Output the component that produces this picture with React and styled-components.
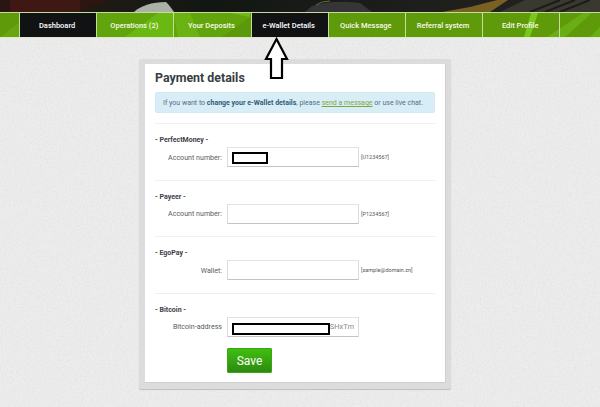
import React from "react";
import styled, { createGlobalStyle } from "styled-components";

const Global = createGlobalStyle`
  html, body { margin: 0; padding: 0; }
  body {
    width: 600px; height: 407px; overflow: hidden;
    background: #ececec;
    font-family: Roboto, "Liberation Sans", sans-serif;
    color: #444;
  }
`;

const Page = styled.div`
  position: relative;
  width: 600px;
  height: 407px;
  overflow: hidden;
`;

const Texture = styled.svg`
  position: absolute;
  inset: 0;
  width: 600px;
  height: 407px;
`;

const Banner = styled.svg`
  display: block;
  position: relative;
  width: 600px;
  height: 12px;
`;

const NavBar = styled.nav`
  position: relative;
  height: 26px;
  box-sizing: border-box;
  background: #5f9a0a;
  border-top: 1px solid #c6dc9c;
  border-bottom: 1px solid #dfe9c8;
  display: flex;
  padding-left: 19px;
`;

const Facets = styled.svg`
  position: absolute;
  left: 0;
  top: 0;
  width: 600px;
  height: 24px;
`;

const NavItem = styled.a`
  position: relative;
  flex: 0 0 77.2px;
  box-sizing: border-box;
  display: flex;
  align-items: center;
  justify-content: center;
  padding-right: 2px;
  font-size: 7.5px;
  font-weight: 500;
  color: ${(p) => (p.$dark ? "#ffffff" : "#f6fbe8")};
  background: ${(p) => (p.$dark ? "#111213" : "transparent")};
  border-left: 1px solid #c6dc9c;
  white-space: nowrap;
`;

const NavEnd = styled.span`
  position: relative;
  width: 0;
  border-left: 1px solid #c6dc9c;
`;

const Main = styled.main`
  position: relative;
  display: flex;
  justify-content: center;
  padding: 21px 10px 0 0;
`;

const Panel = styled.section`
  width: 312px;
  height: 330px;
  box-sizing: border-box;
  padding: 5px 5px 5px 6px;
  background: #dcdcdc;
  border-radius: 2px;
  box-shadow: 0 1px 1px #bdbdbd;
`;

const Card = styled.div`
  height: 319px;
  box-sizing: border-box;
  background: #fff;
  border-right: 1px solid #cfcfcf;
  border-bottom: 1px solid #cfcfcf;
  padding: 6px 10px 0 10px;
`;

const Title = styled.h1`
  margin: 0;
  height: 22px;
  font-size: 12.4px;
  line-height: 15px;
  font-weight: 700;
  color: #3a3d42;
  letter-spacing: 0;
`;

const Notice = styled.p`
  margin: 0 0 10px;
  height: 21px;
  box-sizing: border-box;
  background: #d9edf7;
  border: 1px solid #d2e8f2;
  border-radius: 2px;
  padding: 0 7px;
  font-size: 7px;
  line-height: 20px;
  color: #4f7185;
  white-space: nowrap;
  strong { color: #2f5d78; font-weight: 700; }
  a { color: #7aa83b; text-decoration: underline; }
`;

const Group = styled.div`
  border-top: 1px solid #f0f0f0;
  height: 56.5px;
  box-sizing: border-box;
  padding-top: 12px;
`;

const GroupTitle = styled.div`
  font-size: 7px;
  line-height: 9px;
  font-weight: 700;
  color: #3d4148;
  margin-bottom: 2px;
`;

const Row = styled.div`
  display: grid;
  grid-template-columns: 67px 132px auto;
  column-gap: 5px;
  align-items: center;
`;

const Label = styled.label`
  text-align: right;
  font-size: 7.1px;
  color: #5a5d60;
  white-space: nowrap;
`;

const FieldWrap = styled.div`
  position: relative;
  height: 20px;
`;

const Field = styled.input`
  display: block;
  width: 132px;
  height: 20px;
  box-sizing: border-box;
  padding: 0 4px;
  text-align: right;
  font: 7.5px Roboto, "Liberation Sans", sans-serif;
  color: #8a8a8a;
  background: #fff;
  border: 1px solid #dcdcdc;
  border-bottom: 1px solid #c4c4c4;
  border-top: 1px solid #e2e2e2;
  outline: none;
`;

const Redact = styled.span`
  position: absolute;
  left: ${(p) => p.$left}px;
  top: ${(p) => p.$top}px;
  width: ${(p) => p.$width}px;
  height: ${(p) => p.$height}px;
  box-sizing: border-box;
  background: #fff;
  border: 2.5px solid #000;
`;

const Hint = styled.span`
  margin-left: -3px;
  font-size: 5.5px;
  color: #55585c;
  white-space: nowrap;
`;

const Save = styled.button`
  display: block;
  width: 45px;
  height: 25px;
  margin: -1px 0 0 72px;
  padding: 0;
  font: 400 12px Roboto, "Liberation Sans", sans-serif;
  color: #fff;
  background: linear-gradient(#3fbf10, #2d8a0f);
  border: 1px solid #3aa516;
  border-radius: 1px;
`;

const Arrow = styled.svg`
  position: absolute;
  left: 262px;
  top: 36px;
  width: 30px;
  height: 46px;
`;

const items = [
  ["Dashboard", true],
  ["Operations (2)"],
  ["Your Deposits"],
  ["e-Wallet Details", true],
  ["Quick Message"],
  ["Referral system"],
  ["Edit Profile"],
];

const groups = [
  { name: "PerfectMoney", label: "Account number:", hint: "[U1234567]", redact: { $left: 5, $top: 5, $width: 36, $height: 12 } },
  { name: "Payeer", label: "Account number:", hint: "[P1234567]" },
  { name: "EgoPay", label: "Wallet:", hint: "[sample@domain.zn]" },
  { name: "Bitcoin", label: "Bitcoin-address", value: "SHxTm", redact: { $left: 5, $top: 6, $width: 98, $height: 12 } },
];

export default function App() {
  return (
    <Page>
      <Global />
      <Texture aria-hidden="true">
        <filter id="grain">
          <feTurbulence type="fractalNoise" baseFrequency="0.55" numOctaves="2" seed="4" />
          <feColorMatrix values="0 0 0 0 0.6  0 0 0 0 0.6  0 0 0 0 0.6  0 0 0 0.6 -0.26" />
        </filter>
        <rect width="600" height="407" filter="url(#grain)" />
      </Texture>

      <Banner viewBox="0 0 600 12" aria-hidden="true">
        <defs>
          <linearGradient id="bg" x1="0" x2="1" y1="0" y2="0">
            <stop offset="0" stopColor="#2a1512" />
            <stop offset="0.2" stopColor="#1c1a14" />
            <stop offset="0.35" stopColor="#121712" />
            <stop offset="0.7" stopColor="#1e1e1c" />
            <stop offset="1" stopColor="#23241e" />
          </linearGradient>
        </defs>
        <rect width="600" height="12" fill="url(#bg)" />
        <rect x="10" y="0" width="70" height="12" fill="#4a1a14" opacity="0.7" />
        <path d="M80 12 L90 6 L110 0 L80 0Z" fill="#33150f" opacity="0.7" />
        <path d="M134 12 C140 6 152 2 166 2 C170 6 172 9 174 12Z" fill="#aab2a6" />
        <path d="M312 6 C326 1 345 1 360 3 L372 12 L305 12Z" fill="#353537" />
        <path d="M316 5 L322 2 L330 1" stroke="#5d6f2a" strokeWidth="1" fill="none" />
        <path d="M442 12 L470 7 L497 0 L508 0 L490 12Z" fill="#8a6c24" opacity="0.85" />
        <path d="M500 12 L525 0 L600 0 L600 12Z" fill="#3a392f" />
        <path d="M530 12 L560 0 M545 12 L575 0 M560 12 L590 0" stroke="#1c1c18" strokeWidth="2" />
      </Banner>

      <NavBar>
        <Facets viewBox="0 0 600 24" aria-hidden="true">
          <path d="M0 24 L19 10 L19 24Z" fill="#66a60f" />
          <path d="M96 0 L250 0 L250 24 L96 24Z" fill="#62a40c" />
          <path d="M125 24 L158 0 L173 0 L173 24Z" fill="#6ab812" />
          <path d="M173 0 L190 0 L200 24 L178 24Z" fill="#6ab312" />
          <path d="M222 24 L250 4 L250 24Z" fill="#5c980c" />
          <path d="M230 0 L250 0 L250 4Z" fill="#70ba16" />
          <path d="M524 24 L531 0 L538 0 L530 24Z" fill="#78c81c" />
          <path d="M547 24 L583 0 L592 0 L565 24Z" fill="#69ae14" />
          <path d="M590 24 L600 14 L600 24Z" fill="#69ae14" />
        </Facets>
        {items.map(([t, d]) => (
          <NavItem key={t} $dark={d}>{t}</NavItem>
        ))}
        <NavEnd />
      </NavBar>

      <Main>
        <Panel>
          <Card>
            <Title>Payment details</Title>
            <Notice>
              If you want to <strong>change your e-Wallet details</strong>, please{" "}
              <a>send a message</a> or use live chat.
            </Notice>
            {groups.map((g) => (
              <Group key={g.name}>
                <GroupTitle>- {g.name} -</GroupTitle>
                <Row>
                  <Label>{g.label}</Label>
                  <FieldWrap>
                    <Field readOnly value={g.value || ""} />
                    {g.redact && <Redact {...g.redact} />}
                  </FieldWrap>
                  <Hint>{g.hint}</Hint>
                </Row>
              </Group>
            ))}
            <Save>Save</Save>
          </Card>
        </Panel>
      </Main>

      <Arrow viewBox="0 0 30 46" aria-hidden="true">
        <path d="M14.5 3 L25 23 L20 23 L20 42 L9 42 L9 23 L4 23Z" fill="#fff" stroke="#000" strokeWidth="2.2" />
      </Arrow>
    </Page>
  );
}
